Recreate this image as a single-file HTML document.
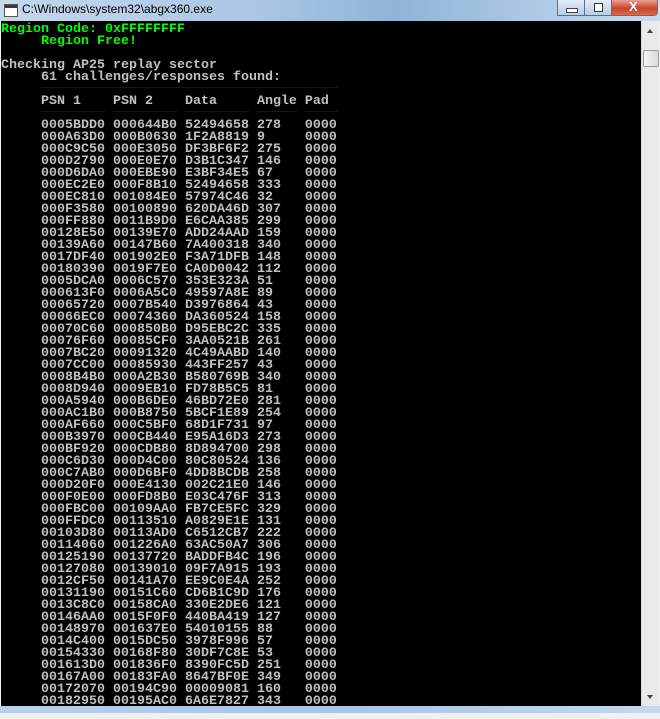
<!DOCTYPE html>
<html><head><meta charset="utf-8"><style>
html,body{margin:0;padding:0;width:660px;height:719px;overflow:hidden;background:#f0f0f0;position:relative;font-family:"Liberation Sans",sans-serif}
.title{position:absolute;left:0;top:0;width:660px;height:21px;background:linear-gradient(90deg,#c5d8ec 0%,#a9c6e4 40%,#8fb4d8 60%,#c9dcef 100%)}
.title span{position:absolute;left:22px;top:2px;font-size:12px;color:#000}
.ico{position:absolute;left:4px;top:4px;width:12px;height:11px;border:1px solid #555;background:#fff}
.ico:after{content:"";position:absolute;left:0;top:0;width:12px;height:3px;background:#3a3a3a}
.btn{position:absolute;top:0;height:15px;border:1px solid #5b6f88;border-top:none;background:linear-gradient(#e2ecf6,#b9cde3)}
.close{background:linear-gradient(#e9a091,#c8452e 55%,#d96a4a)}
.con{position:absolute;left:1px;top:21px;width:640px;height:685px;background:#000;overflow:hidden}
pre{margin:0;font-family:"Liberation Mono",monospace;font-weight:bold;font-size:13.33px;line-height:12px;color:#c0c0c0;position:absolute;left:0;top:3px;letter-spacing:0}
.g{color:#00ff00}
.bl{position:absolute;height:1px;background:#0000c8}
.sb{position:absolute;left:641px;top:21px;width:17px;height:685px;background:#eaeaea;border-left:1px solid #d8d8d8}
.thumb{position:absolute;left:1px;top:29px;width:14px;height:15px;border:1px solid #9a9a9a;border-radius:2px;background:linear-gradient(90deg,#f4f4f4,#dcdcdc)}
.bot{position:absolute;left:0;top:706px;width:660px;height:7px;background:linear-gradient(90deg,#b9d1ea,#a8c4e2,#c4d8ee)}
</style></head><body>
<div class="title"><div class="ico"></div><span>C:\Windows\system32\abgx360.exe</span></div>
<div class="btn" style="left:557px;width:26px"><div style="position:absolute;left:8px;top:8px;width:10px;height:3px;background:#fff;border:1px solid #445"></div></div>
<div class="btn" style="left:584px;width:26px"><div style="position:absolute;left:9px;top:3px;width:7px;height:7px;border:1px solid #334;background:#fff"></div></div>
<div class="btn close" style="left:611px;width:45px;border-radius:0 0 4px 0"><span style="position:absolute;left:17px;top:-1px;color:#fff;font-weight:bold;font-size:13px">X</span></div>
<div class="con">
<pre><span class="g">Region Code: 0xFFFFFFFF
     Region Free!</span>

Checking AP25 replay sector
     61 challenges/responses found:

     PSN 1    PSN 2    Data     Angle Pad

     0005BDD0 000644B0 52494658 278   0000
     000A63D0 000B0630 1F2A8819 9     0000
     000C9C50 000E3050 DF3BF6F2 275   0000
     000D2790 000E0E70 D3B1C347 146   0000
     000D6DA0 000EBE90 E3BF34E5 67    0000
     000EC2E0 000F8B10 52494658 333   0000
     000EC810 001084E0 57974C46 32    0000
     000F3580 00100890 620DA46D 307   0000
     000FF880 0011B9D0 E6CAA385 299   0000
     00128E50 00139E70 ADD24AAD 159   0000
     00139A60 00147B60 7A400318 340   0000
     0017DF40 001902E0 F3A71DFB 148   0000
     00180390 0019F7E0 CA0D0042 112   0000
     0005DCA0 0006C570 353E323A 51    0000
     000613F0 0006A5C0 49597A8E 89    0000
     00065720 0007B540 D3976864 43    0000
     00066EC0 00074360 DA360524 158   0000
     00070C60 000850B0 D95EBC2C 335   0000
     00076F60 00085CF0 3AA0521B 261   0000
     0007BC20 00091320 4C49AABD 140   0000
     0007CC00 00085930 443FF257 43    0000
     0008B4B0 000A2B30 B580769B 340   0000
     0008D940 0009EB10 FD78B5C5 81    0000
     000A5940 000B6DE0 46BD72E0 281   0000
     000AC1B0 000B8750 5BCF1E89 254   0000
     000AF660 000C5BF0 68D1F731 97    0000
     000B3970 000CB440 E95A16D3 273   0000
     000BF920 000CDB80 8D894700 298   0000
     000C6D30 000D4C00 80C80524 136   0000
     000C7AB0 000D6BF0 4DD8BCDB 258   0000
     000D20F0 000E4130 002C21E0 146   0000
     000F0E00 000FD8B0 E03C476F 313   0000
     000FBC00 00109AA0 FB7CE5FC 329   0000
     000FFDC0 00113510 A0829E1E 131   0000
     00103D80 00113AD0 C6512CB7 222   0000
     00114060 001226A0 63AC50A7 306   0000
     00125190 00137720 BADDFB4C 196   0000
     00127080 00139010 09F7A915 193   0000
     0012CF50 00141A70 EE9C0E4A 252   0000
     00131190 00151C60 CD6B1C9D 176   0000
     0013C8C0 00158CA0 330E2DE6 121   0000
     00146AA0 0015F0F0 440BA419 127   0000
     00148970 001637E0 54010155 88    0000
     0014C400 0015DC50 3978F996 57    0000
     00154330 00168F80 30DF7C8E 53    0000
     001613D0 001836F0 8390FC5D 251   0000
     00167A00 00183FA0 8647BF0E 349   0000
     00172070 00194C90 00009081 160   0000
     00182950 00195AC0 6A6E7827 343   0000</pre>
<div class="bl" style="left:40px;top:66px;width:297px"></div>
<div class="bl" style="left:40px;top:90px;width:64px"></div>
<div class="bl" style="left:112px;top:90px;width:64px"></div>
<div class="bl" style="left:184px;top:90px;width:64px"></div>
<div class="bl" style="left:256px;top:90px;width:40px"></div>
<div class="bl" style="left:304px;top:90px;width:33px"></div>
</div>
<div class="sb"><div style="position:absolute;left:5px;top:8px;border:3px solid transparent;border-bottom:4px solid #444;border-top:none"></div><div class="thumb"></div><div style="position:absolute;left:5px;top:674px;border:3px solid transparent;border-top:4px solid #444;border-bottom:none"></div></div>
<div class="bot"></div>
</body></html>
